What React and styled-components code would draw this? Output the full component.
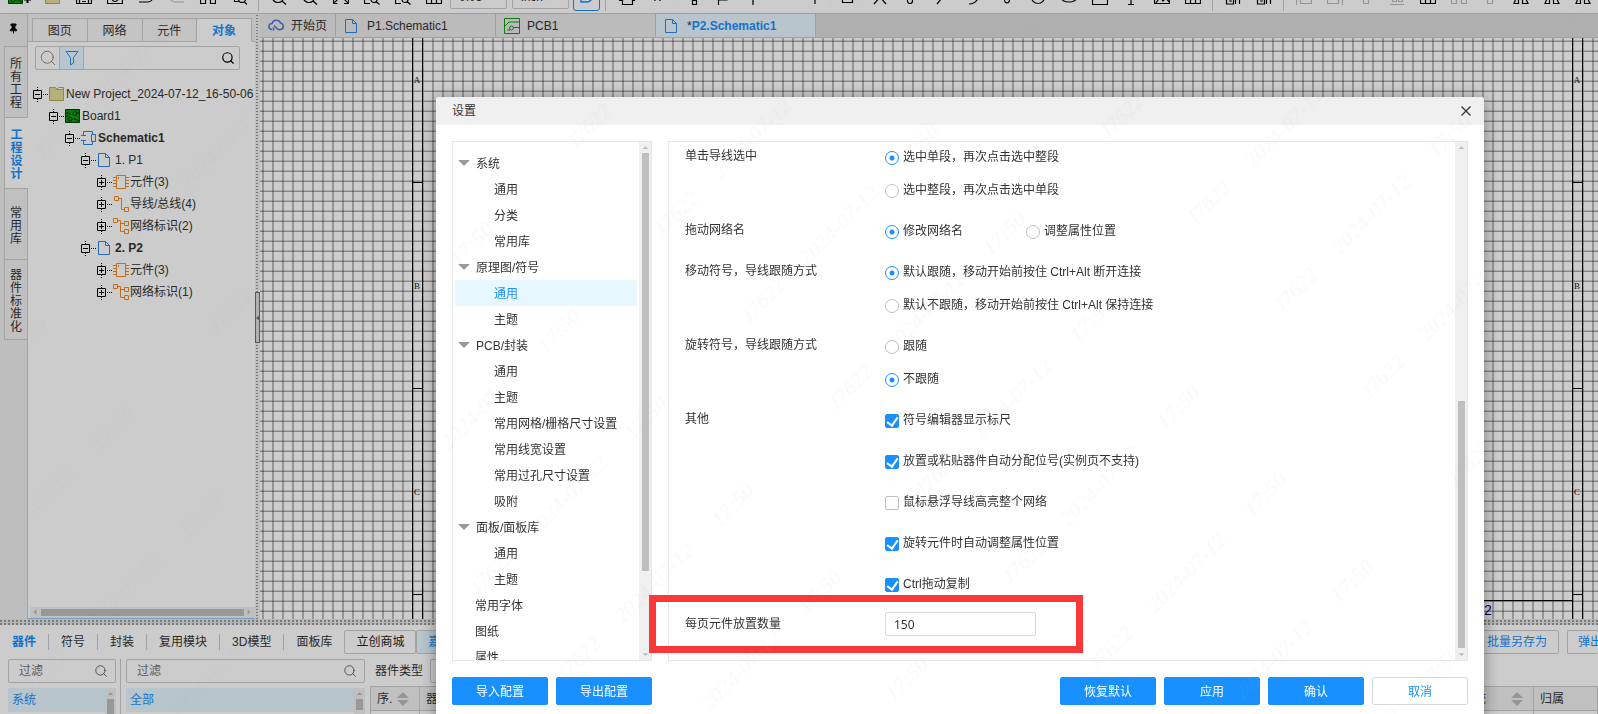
import React from 'react'
import styled, { createGlobalStyle, css } from 'styled-components'
import { Pin, Search } from 'lucide-react'

const GlobalStyle = createGlobalStyle`
  * {
    box-sizing: border-box;
  }

  body {
    margin: 0;
    overflow: hidden;
  }

  body,
  button,
  input,
  select {
    font-family: 'Liberation Sans', 'Noto Sans CJK SC', sans-serif;
    font-size: 12px;
    line-height: 16px;
    color: #333;
  }
`

const Page = styled.div`
  display: grid;
  grid-template-rows: 14px minmax(0, 1fr) 95px;
  height: 100vh;
  overflow: hidden;
  background: #fff;
`

/* top toolbar */

const Toolbar = styled.header`
  display: flex;
  align-items: flex-end;
  overflow: hidden;
  padding-left: 6px;
  border-bottom: 1px solid #c8c8c8;
`

const ToolSlot = styled.button`
  flex: none;
  display: flex;
  align-items: flex-end;
  justify-content: center;
  width: ${props => props.$width || 31}px;
  height: 24px;
  padding: 0 0 8px;
  border: none;
  background: none;
  color: ${props => (props.$muted ? '#bbb' : '#000')};
`

const ToolSpace = styled.span`
  flex: none;
  width: 30px;
`

const ToolDivider = styled.span`
  flex: none;
  width: 1px;
  height: 24px;
  margin: 0 ${props => props.$gap || 4}px 2px;
  background: #c8c8c8;
`

const ToolSelect = styled.select`
  appearance: none;
  flex: none;
  width: 57px;
  height: 24px;
  margin: 0 4px 4px 1px;
  padding: 0 8px;
  border: 1px solid #ccc;
  border-radius: 2px;
  background: #fff;
`

const ToolToggle = styled.button`
  flex: none;
  display: flex;
  align-items: flex-end;
  justify-content: center;
  width: 27px;
  height: 26px;
  margin-bottom: 2px;
  padding: 0 0 7px;
  border: 1px solid #1890ff;
  border-radius: 3px;
  background: #fff;
  color: #1890ff;
`

/* project dock */

const Workspace = styled.div`
  display: grid;
  grid-template-columns: 28px 227px 5px minmax(0, 1fr);
  min-height: 0;
`

const Rail = styled.nav`
  display: flex;
  flex-direction: column;
  padding-left: 4px;
  border-right: 1px solid #ccc;
  background: #eee;
`

const PinButton = styled.button`
  display: flex;
  align-items: center;
  justify-content: center;
  height: 32px;
  padding: 0 4px 4px 0;
  border: none;
  background: none;
  color: #000;
`

const RailTab = styled.button`
  display: flex;
  align-items: center;
  justify-content: center;
  min-height: 71px;
  margin-right: ${props => (props.$active ? -1 : 0)}px;
  padding: 9px 0 5px;
  border: 1px solid #ccc;
  border-width: 1px 0 0 1px;
  background: ${props => (props.$active ? '#fff' : '#f0f0f0')};
  color: ${props => (props.$active ? '#1890ff' : '#333')};
  font-weight: ${props => (props.$active ? 'bold' : 'normal')};
  line-height: 13px;

  &:last-child {
    border-bottom-width: 1px;
  }

  span {
    width: 12px;
    word-break: break-all;
  }
`

const DockPanel = styled.section`
  display: flex;
  flex-direction: column;
  min-width: 0;
  border-bottom: 1px solid #96c0ee;
`

const DockTabs = styled.div`
  display: flex;
  height: 28px;
  padding: 4px 3px 0 4px;
  background: #f2f2f2;
  box-shadow: inset 0 -1px #ccc;
`

const DockTab = styled.button`
  flex: 1;
  padding: 2px 0 0;
  border: 1px solid #ccc;
  border-left-width: ${props => (props.$first ? 1 : 0)}px;
  background: #f5f5f5;

  ${props =>
    props.$active &&
    css`
      border-bottom-color: #fff;
      background: #fff;
      color: #1890ff;
      font-weight: bold;
    `}
`

const SearchRow = styled.form`
  display: flex;
  height: 24px;
  margin: 4px 15px 13px 7px;
  border: 1px solid #ccc;
  border-radius: 2px;
`

const SearchButton = styled.button`
  flex: none;
  display: flex;
  align-items: center;
  justify-content: center;
  width: ${props => (props.$last ? 22 : 24)}px;
  padding: 0;
  border: none;
  border-right: ${props => (props.$last ? 'none' : '1px solid #ccc')};
  background: ${props => (props.$active ? '#e6f7ff' : 'none')};
  color: ${props => (props.$last ? '#000' : '#666')};
`

const PlainInput = styled.input`
  flex: 1;
  min-width: 0;
  padding: 0 10px;
  border: none;
  outline: none;
  background: none;

  &::placeholder {
    color: #757575;
  }
`

const Tree = styled.ul`
  flex: 1;
  margin: 0;
  padding: 0;
  overflow: hidden;
  list-style: none;
`

const TreeItem = styled.li`
  display: flex;
  align-items: center;
  height: 22px;
  padding-left: ${props => 5 + props.$level * 16}px;
  font-weight: ${props => (props.$bold ? 'bold' : 'normal')};
  white-space: nowrap;

  svg {
    flex: none;
  }

  span {
    padding-left: ${props => (props.$page ? 2 : 1)}px;
  }
`

const HScroll = styled.div`
  display: flex;
  align-items: center;
  height: 11px;
  margin-left: 2px;
  background: #f0f0f0;
`

const HThumb = styled.div`
  flex: 1;
  height: 7px;
  background: #bfbfbf;
`

const VSplitter = styled.div`
  position: relative;
  background: radial-gradient(circle, #999 0 1px, transparent 1px) 0 0 / 4px 3px
    repeat-y #f0f0f0;
`

const SplitHandle = styled.button`
  position: absolute;
  top: 278px;
  left: 0;
  display: flex;
  align-items: center;
  width: 5px;
  height: 51px;
  padding: 0;
  border: 1px solid #756b6b;
  background: #ddd;
`

/* editor */

const Editor = styled.main`
  display: flex;
  flex-direction: column;
  min-width: 0;
`

const DocTabs = styled.div`
  flex: none;
  display: flex;
  height: 24px;
  border-bottom: 1px solid #ccc;
  background: #dcdcdc;
`

const DocTab = styled.button`
  display: flex;
  align-items: center;
  gap: 7px;
  width: ${props => (props.$home ? 76 : 160)}px;
  padding: 0 8px;
  border: none;
  border-right: 1px solid #c8c8c8;
  background: ${props => (props.$active ? '#e6f7ff' : '#eaeaea')};
  white-space: nowrap;

  b {
    color: #1890ff;
  }
`

const Sheet = styled.svg`
  flex: 1;
  width: 100%;
  min-height: 0;
  background: #fff;
`

/* library */

const Library = styled.section`
  display: flex;
  flex-direction: column;
  min-width: 0;
  overflow: hidden;
`

const HSplitter = styled.div`
  flex: none;
  height: 6px;
  margin-bottom: 5px;
  background: radial-gradient(circle at 1px 1px, #999 0 1px, transparent 1px) 0
    1px / 4px 3px #e6e6e6;
`

const LibraryBar = styled.div`
  flex: none;
  display: flex;
  align-items: center;
  height: 24px;
`

const LibraryTab = styled.button`
  height: 16px;
  padding: 0 12px;
  border: none;
  border-left: ${props => (props.$active ? 'none' : '1px solid #ccc')};
  background: none;
  color: ${props => (props.$active ? '#1890ff' : '#333')};
  font-weight: ${props => (props.$active ? 'bold' : 'normal')};
`

const BoxButton = styled.button`
  flex: none;
  height: 24px;
  padding: 0 11px;
  border: 1px solid #ccc;
  background: ${props => (props.$active ? '#e6f7ff' : '#fff')};
  color: ${props => (props.$blue ? '#1890ff' : '#222')};
  border-radius: 2px;
`

const BarEnd = styled.div`
  display: flex;
  gap: 8px;
  margin-left: auto;
`

const CutButton = styled(BoxButton)`
  width: 31px;
  padding: 0 0 0 10px;
  border-right: none;
  overflow: hidden;
  text-align: left;
  white-space: nowrap;
`

const LibraryBody = styled.div`
  display: grid;
  grid-template-columns: 113px 245px minmax(0, 1fr);
  flex: 1;
  margin-top: 5px;
  padding-left: 8px;
`

const LibraryColumn = styled.div`
  padding-right: ${props => (props.$divided ? 4 : 1)}px;
  padding-left: ${props => (props.$divided ? 0 : 5)}px;
  border-right: ${props => (props.$divided ? '1px solid #ccc' : 'none')};
`

const FilterBox = styled.label`
  display: flex;
  align-items: center;
  height: 24px;
  margin-bottom: 5px;
  padding-right: 7px;
  border: 1px solid #ccc;
  border-radius: 2px;
  color: #555;
`

const ListRow = styled.div`
  display: flex;
  height: 28px;
`

const ListItem = styled.button`
  flex: 1;
  height: 24px;
  padding: 0 4px;
  border: none;
  background: #e6f7ff;
  color: #1890ff;
  text-align: left;
`

const TypeRow = styled.label`
  display: flex;
  align-items: center;
  gap: 7px;
  height: 24px;
  padding-left: 9px;
`

const TypeInput = styled.input`
  width: 140px;
  height: 24px;
  border: 1px solid #ccc;
  border-radius: 2px;
`

const PartTable = styled.table`
  width: calc(100% - 4px);
  margin: 3px 0 0 4px;
  border-collapse: collapse;
  table-layout: fixed;

  th,
  td {
    height: 24px;
    padding: 0 6px;
    border: 1px solid #ccc;
    font-weight: normal;
    text-align: left;
    white-space: nowrap;
  }

  th {
    background: #f0f0f0;
  }
`

const HeadCell = styled.span`
  display: flex;
  align-items: center;
  justify-content: ${props => (props.$end ? 'flex-end' : 'flex-start')};
  gap: ${props => (props.$end ? 25 : 5)}px;
  padding-right: ${props => (props.$end ? 4 : 0)}px;
`

/* settings dialog */

const Backdrop = styled.div`
  position: fixed;
  inset: 0;
  padding: 97px 114px 0 436px;
  background: rgba(0, 0, 0, 0.2);
`

const Dialog = styled.div`
  position: relative;
  border-radius: 3px;
  background: #fff;
  box-shadow: 0 2px 16px rgba(0, 0, 0, 0.4);
`

const DialogHead = styled.div`
  display: flex;
  align-items: center;
  justify-content: space-between;
  height: 28px;
  padding: 0 12px 0 16px;
  border-radius: 3px 3px 0 0;
  background: #f0f0f0;
`

const CloseButton = styled.button`
  display: flex;
  padding: 0;
  border: none;
  background: none;
`

const DialogBody = styled.div`
  display: grid;
  grid-template-columns: 200px minmax(0, 1fr);
  gap: 16px;
  padding: 16px;
`

const Pane = styled.div`
  display: flex;
  height: 520px;
  border: 1px solid #e6e6e6;
`

const MenuList = styled.ul`
  flex: 1;
  margin: 0;
  padding: 8px 2px 0;
  overflow: hidden;
  list-style: none;
`

const MenuItem = styled.li`
  display: flex;
  align-items: center;
  gap: 6px;
  height: 26px;
  padding-left: ${props => (props.$level ? 39 : props.$leaf ? 20 : 3)}px;
  background: ${props => (props.$active ? '#e6f7ff' : 'none')};
  color: ${props => (props.$active ? '#1890ff' : '#333')};

  span {
    padding-top: 2px;
  }
`

const VScroll = styled.div`
  flex: none;
  display: flex;
  flex-direction: column;
  align-items: center;
  justify-content: space-between;
  width: ${props => props.$width || 12}px;
  background: #f0f0f0;
`

const VTrack = styled.div`
  flex: 1;
  width: 7px;
  padding-top: ${props => props.$from}px;
`

const VThumb = styled.div`
  height: ${props => props.$size}px;
  background: #bfbfbf;
`

const Form = styled.form`
  flex: 1;
  display: flex;
  flex-direction: column;
  gap: 9px;
  overflow: hidden;
`

const Field = styled.fieldset`
  display: grid;
  grid-template-columns: 200px minmax(0, 1fr);
  margin: 0;
  padding: 0 0 0 16px;
  border: none;
`

const FieldName = styled.span`
  padding-top: 6px;
`

const Options = styled.div`
  display: ${props => (props.$inline ? 'flex' : 'grid')};
  row-gap: ${props => (props.$loose ? 9 : 1)}px;
`

const Option = styled.label`
  display: flex;
  align-items: center;
  gap: 4px;
  min-width: 141px;
  height: 32px;

  span {
    padding-bottom: 2px;
  }
`

const Radio = styled.input`
  appearance: none;
  flex: none;
  width: 14px;
  height: 14px;
  margin: 0;
  border: 1px solid #bfbfbf;
  border-radius: 50%;
  background: #fff;

  &:checked {
    border-color: #1890ff;
    background: radial-gradient(circle, #1890ff 2px, #fff 3px);
  }
`

const Checkbox = styled.input`
  appearance: none;
  flex: none;
  display: grid;
  place-items: center;
  width: 14px;
  height: 14px;
  margin: 0;
  border: 1px solid #bfbfbf;
  border-radius: 2px;
  background: #fff;

  &:checked {
    border-color: #1890ff;
    background: #1890ff;
  }

  &:checked::after {
    content: '';
    width: 5px;
    height: 9px;
    border: solid #fff;
    border-width: 0 2px 2px 0;
    transform: translateY(-1px) rotate(35deg);
  }
`

const NumberInput = styled.input`
  width: 151px;
  height: 24px;
  margin-top: 2px;
  padding: 0 8px;
  border: 1px solid #d9d9d9;
  border-radius: 2px;
  outline: none;
  font-family: 'Noto Sans', sans-serif;
`

const Highlight = styled.div`
  position: absolute;
  top: 498px;
  left: 213px;
  width: 434px;
  height: 58px;
  border: 7px solid #fb3838;
  pointer-events: none;
`

const DialogFoot = styled.div`
  display: flex;
  gap: 8px;
  padding: 0 16px 16px;
`

const Button = styled.button`
  width: 96px;
  height: 28px;
  padding: 2px 0 0;
  border: 1px solid ${props => (props.$plain ? '#d9d9d9' : '#1890ff')};
  border-radius: 2px;
  background: ${props => (props.$plain ? '#fff' : '#1890ff')};
  color: ${props => (props.$plain ? '#1890ff' : '#fff')};

  &.push {
    margin-left: auto;
  }
`

const WatermarkLayer = styled.svg`
  position: fixed;
  inset: 0;
  width: 100%;
  height: 100%;
  pointer-events: none;
`

/* drawings */

const Glyph = ({ w = 16, h = 16, color = 'currentColor', children }) => (
  <svg
    width={w}
    height={h}
    viewBox={`0 0 ${w} ${h}`}
    fill="none"
    stroke={color}
    aria-hidden="true"
  >
    {children}
  </svg>
)

const Arrow = ({ dir }) => {
  const points = {
    up: '3,7 6,4 9,7',
    down: '3,4 6,7 9,4',
    left: '7,2 4,5 7,8',
    right: '4,2 7,5 4,8',
  }
  return (
    <svg width="11" height="11" viewBox="0 0 12 11" fill="#bbb">
      <polygon points={points[dir]} />
    </svg>
  )
}

const Caret = () => (
  <svg width="12" height="7" viewBox="0 0 12 7" fill="#999">
    <polygon points="0,0 12,0 6,6" />
  </svg>
)

const SortIcon = () => (
  <svg width="12" height="14" viewBox="0 0 12 14" fill="#bbb">
    <polygon points="0,6 6,0 12,6" />
    <polygon points="0,8 12,8 6,14" />
  </svg>
)

const Toggle = ({ open }) => (
  <Glyph h={22} color="#000">
    <path d="M0.5 7.5h8v8h-8zM2 11.5h5" />
    {!open && <path d="M4.5 9v5" />}
    <path d="M4.5 4v3M4.5 16v3M10 11.5h5" strokeDasharray="1 1" />
  </Glyph>
)

const PageIcon = () => (
  <Glyph color="#2a86e8">
    <path d="M1.5 1.5h7l4 4v9h-11zM8.5 1.5v4h4" />
  </Glyph>
)

const icons = {
  folder: (
    <Glyph color="#b5a85a">
      <path d="M.5 1.5h6l1 2h7v11H.5z" fill="#e6dc9a" />
      <path d="M7.5 3.5l2-2h5v2" />
    </Glyph>
  ),
  board: (
    <Glyph color="#003c00">
      <path d="M.5 1.5h14v13H.5z" fill="#0a9a12" />
      <circle cx="10" cy="5.500" r="2" />
      <circle cx="5" cy="11" r="2" />
      <path d="M1 5h3l2 2M12 5l2-1M7 11h3l4 2M1 9l3-2" />
    </Glyph>
  ),
  schematic: (
    <Glyph color="#2a86e8">
      <path d="M2.5 6V1.500h9V4M2.500 10v4.500h9V12M0 5.500h5M0 10.500h5M10.500 4.500h4v7h-4z" />
    </Glyph>
  ),
  page: <PageIcon />,
  part: (
    <Glyph color="#f08a24">
      <path d="M3.500 1.500h9v13h-9zM0 3.500h3M0 6.500h3M0 9.500h3M0 12.500h3M13 3.500h3M13 6.500h3M13 9.500h3M13 12.500h3M5.500 3v2" />
    </Glyph>
  ),
  wire: (
    <Glyph color="#f08a24">
      <path d="M1.500.5h4v4h-4zM11.500 11.500h4v4h-4zM5.500 2.500h3v11h3" />
    </Glyph>
  ),
  net: (
    <Glyph color="#f08a24">
      <path d="M.5.5h4v4h-4zM11.500 3.500h4v4h-4zM11.500 11.500h4v4h-4zM4.500 2.500h3v11h4M7.500 5.500h4" />
    </Glyph>
  ),
}

const PcbIcon = () => (
  <Glyph color="#0a9a12">
    <path d="M.5.5h15v15H.5zM1 8l4-4h10M3 12h3M10 9.500h5" />
    <circle cx="7.500" cy="10" r="2" />
  </Glyph>
)

const CloudIcon = () => (
  <Glyph color="#4f77e0">
    <path
      d="M4 11.500a3 3 0 1 1 0-6 4.500 4.500 0 0 1 8.500-.5 3.300 3.300 0 0 1 0 6.500h-2.500l-4-4M5.500 9.500v3"
      strokeWidth="1.600"
    />
  </Glyph>
)

const FilterIcon = () => (
  <Glyph color="#1890ff">
    <path d="M2 1.500h12l-4.500 6v5.500l-3 2v-7.500z" />
  </Glyph>
)

const toolPaths = {
  camera: 'M.5 3.500h15v11H.5zM8 6.500a3 3 0 1 1 0 6 3 3 0 0 1 0-6z',
  save: 'M.5.5h15v14H.5zM3.500 14v-4h9v4M6 12.500h4',
  undo: 'M3 1l-3 3 3 3M1 4h9a4 4 0 0 1 0 9H1',
  redo: 'M13 1l3 3-3 3M15 4H6a4 4 0 0 0 0 9h9',
  columns: 'M.5.5h5v14h-5zM10.500.5h5v14h-5z',
  find: 'M0 9.500h4M3.500 7v5.500h4M11 6.500a3.500 3.500 0 1 1 0 7 3.500 3.500 0 0 1 0-7zM13.500 13l2.500 2.500',
  zoom: 'M7 1.500a6 6 0 1 1 0 12 6 6 0 0 1 0-12zM11 12l4 3.500M4 7.500h6',
  expand: 'M5 5L1 1M11 5l4-4M5 10l-4 4M11 10l4 4M.5 10v4.500h4M11 14.500h4.500V10',
  area: 'M6 14.500H.5v-14h14V5M10 7.500a3 3 0 1 1 0 6 3 3 0 0 1 0-6zM12.500 13l3 2.500',
  grid: 'M.5.500h15v14H.5zM.5 9.500h15M5.500 1v13M10.500 1v13',
  chip: 'M3.500 2.500h10v13h-10zM0 11.500h3M14 11.500h3',
  wires: 'M3 1l2 11M8 1l2 11M13 1v10',
  nodes: 'M4.500 1v8h6M10.500 6.500h4v4h-4zM8.500 11.500h4v4h-4z',
  flag: 'M3.500 1v15M4 3h8v8H4',
  sheet: 'M.5 2.500h15v8H.5zM8 11v5',
  stem: 'M8 0v15',
  box: 'M3.500 2.500h10v11h-10z',
  cross: 'M2 15L14 1M2 1l12 14',
  pin: 'M8 9.500a2 2 0 1 1 0 5 2 2 0 0 1 0-5zM8 0v9',
  line: 'M5 15L14 4',
  arc: 'M3 15q10 0 10-13',
  bezier: 'M5 1q-1 13 3 13t3-13',
  circle: 'M8 1.500a6.500 6.500 0 1 1 0 13 6.500 6.500 0 0 1 0-13z',
  ellipse: 'M8 4a7 4 0 1 1 0 9 7 4 0 0 1 0-9z',
  rect: 'M.5 2.500h15v13H.5z',
  text: 'M2 1.500h12M8 2v13M5 15.500h6',
  image: 'M.5 1.500h15v13H.5zM2 14l4-6 3 4 3-3 3 4',
  pair: 'M1.500 1v14h7V9h-4M10.500 1v14M14.500 1v14M4 12h3',
  alignLeft: 'M.5 0v16M4.500 2.500h11v12h-11z',
  alignRight: 'M15.500 0v16M.5 2.500h11v12H.5z',
  centre: 'M5.500 1.500h5v13h-5z',
  bottom: 'M1 15.500h14M3.500 2.500h4v10h-4zM9.500 2.500h4v10h-4z',
  mirror: 'M1 14.500L5.500 3v11.500zM9.500 3v11.500H15z',
}

const Tool = ({ name, muted, width }) => (
  <ToolSlot $muted={muted} $width={width} aria-label={name}>
    <Glyph>
      <path d={toolPaths[name]} strokeWidth="1.200" />
    </Glyph>
  </ToolSlot>
)

const ToolCaret = () => (
  <svg width="5" height="14" viewBox="0 0 5 14" fill="#888">
    <polygon points="0,0 5,0 2,3" />
  </svg>
)

const fileTools = ['save', 'camera', 'undo', 'redo', 'columns', 'find']
const viewTools = ['zoom', 'zoom', 'expand', 'area', 'area', 'grid']
const shapeTools = [
  'bezier',
  'circle',
  'ellipse',
  'rect',
  'text',
  'image',
  'grid',
]
const alignTools = [
  'alignLeft',
  'alignRight',
  'centre',
  'bottom',
  'grid',
  'columns',
  'centre',
  'mirror',
  'mirror',
  'mirror',
]

const treeRows = [
  { level: 0, icon: 'folder', text: 'New Project_2024-07-12_16-50-06', open: true },
  { level: 1, icon: 'board', text: 'Board1', open: true },
  { level: 2, icon: 'schematic', text: 'Schematic1', open: true, bold: true },
  { level: 3, icon: 'page', text: '1. P1', open: true },
  { level: 4, icon: 'part', text: '元件(3)' },
  { level: 4, icon: 'wire', text: '导线/总线(4)' },
  { level: 4, icon: 'net', text: '网络标识(2)' },
  { level: 3, icon: 'page', text: '2. P2', open: true, bold: true },
  { level: 4, icon: 'part', text: '元件(3)' },
  { level: 4, icon: 'net', text: '网络标识(1)' },
]

const menuGroups = [
  { name: '系统', items: ['通用', '分类', '常用库'] },
  { name: '原理图/符号', items: ['通用', '主题'], active: '通用' },
  {
    name: 'PCB/封装',
    items: [
      '通用',
      '主题',
      '常用网格/栅格尺寸设置',
      '常用线宽设置',
      '常用过孔尺寸设置',
      '吸附',
    ],
  },
  { name: '面板/面板库', items: ['通用', '主题'] },
  { name: '常用字体' },
  { name: '图纸' },
  { name: '属性' },
]

const radioFields = [
  {
    name: '单击导线选中',
    options: ['选中单段，再次点击选中整段', '选中整段，再次点击选中单段'],
    value: 0,
  },
  {
    name: '拖动网络名',
    options: ['修改网络名', '调整属性位置'],
    value: 0,
    inline: true,
  },
  {
    name: '移动符号，导线跟随方式',
    options: [
      '默认跟随，移动开始前按住 Ctrl+Alt 断开连接',
      '默认不跟随，移动开始前按住 Ctrl+Alt 保持连接',
    ],
    value: 0,
  },
  { name: '旋转符号，导线跟随方式', options: ['跟随', '不跟随'], value: 1 },
]

const otherOptions = [
  ['符号编辑器显示标尺', true],
  ['放置或粘贴器件自动分配位号(实例页不支持)', true],
  ['鼠标悬浮导线高亮整个网络', false],
  ['旋转元件时自动调整属性位置', true],
  ['Ctrl拖动复制', true],
]

const TopToolbar = () => (
  <Toolbar>
    <ToolSlot aria-label="new">
      {icons.board}
      <Glyph w={7}>
        <path d="M0 10.500h7M3.500 7v7" strokeWidth="2" />
      </Glyph>
      <ToolCaret />
    </ToolSlot>
    <ToolSlot aria-label="open">{icons.folder}</ToolSlot>
    {fileTools.map(name => (
      <Tool key={name} name={name} muted={name === 'redo'} />
    ))}
    <ToolDivider />
    {viewTools.map((name, i) => (
      <Tool key={i} name={name} />
    ))}
    <ToolSelect aria-label="grid size">
      <option>0.05</option>
    </ToolSelect>
    <ToolSelect aria-label="unit">
      <option>inch</option>
    </ToolSelect>
    <ToolToggle aria-label="snap">
      <Glyph w={14} h={12}>
        <path d="M1 1v10h6a5 5 0 0 0 5-5V0M4 8h4" strokeWidth="1.500" />
      </Glyph>
    </ToolToggle>
    <ToolDivider $gap={5} />
    <Tool name="chip" />
    <Tool name="wires" />
    <ToolCaret />
    <Tool name="nodes" width={36} />
    <Tool name="flag" width={26} />
    <Tool name="sheet" width={34} />
    <ToolSpace />
    <Tool name="stem" />
    <ToolCaret />
    <Tool name="box" />
    <ToolCaret />
    <Tool name="cross" width={34} />
    <Tool name="pin" width={26} />
    <Tool name="line" width={34} />
    <Tool name="arc" width={34} />
    {shapeTools.map(name => (
      <Tool key={name} name={name} />
    ))}
    <ToolDivider />
    <Tool name="pair" />
    <Tool name="pair" />
    <ToolDivider />
    {alignTools.map((name, i) => (
      <Tool key={i} name={name} muted={i !== 4 && i < 7} />
    ))}
  </Toolbar>
)

const ProjectDock = () => (
  <>
    <Rail>
      <PinButton aria-label="pin">
        <Pin size={11} fill="#000" />
      </PinButton>
      {['所有工程', '工程设计', '常用库', '器件标准化'].map(name => (
        <RailTab key={name} $active={name === '工程设计'}>
          <span>{name}</span>
        </RailTab>
      ))}
    </Rail>
    <DockPanel>
      <DockTabs>
        {['图页', '网络', '元件', '对象'].map((name, i) => (
          <DockTab key={name} $first={i === 0} $active={name === '对象'}>
            {name}
          </DockTab>
        ))}
      </DockTabs>
      <SearchRow>
        <SearchButton type="button" aria-label="find">
          <Search size={18} strokeWidth={1} />
        </SearchButton>
        <SearchButton type="button" aria-label="filter" $active>
          <FilterIcon />
        </SearchButton>
        <PlainInput aria-label="search objects" />
        <SearchButton type="button" aria-label="search" $last>
          <Search size={14} strokeWidth={2} />
        </SearchButton>
      </SearchRow>
      <Tree>
        {treeRows.map((row, i) => (
          <TreeItem
            key={i}
            $level={row.level}
            $bold={row.bold}
            $page={row.icon === 'page'}
          >
            <Toggle open={row.open} />
            {icons[row.icon]}
            <span>{row.text}</span>
          </TreeItem>
        ))}
      </Tree>
      <HScroll>
        <Arrow dir="left" />
        <HThumb />
        <Arrow dir="right" />
      </HScroll>
    </DockPanel>
    <VSplitter>
      <SplitHandle aria-label="collapse">
        <svg width="4" height="6" viewBox="0 0 4 6" fill="#756b6b">
          <polygon points="0,3 4,0 4,6" />
        </svg>
      </SplitHandle>
    </VSplitter>
  </>
)

const SchematicSheet = () => (
  <Sheet>
    <defs>
      <pattern id="grid" x="2" y="2" width="10" height="10" patternUnits="userSpaceOnUse">
        <rect width="2" height="10" fill="#bbb" />
        <rect width="10" height="1" fill="#000" fillOpacity="0.15" />
        <rect y="1" width="10" height="1" fill="#000" fillOpacity="0.35" />
      </pattern>
    </defs>
    <rect width="100%" height="100%" fill="url(#grid)" />
    <path
      d="M152.500 0v600M162.500 0v600M1312.500 0v600M1322.500 0v600M153 144.500h10M153 350.500h10M153 556.500h10M1313 144.500h10M1313 350.500h10M1313 556.500h10M700 562.500h613"
      stroke="#000"
      shapeRendering="crispEdges"
    />
    <g fill="#111" fontFamily="Liberation Serif" fontSize="9" textAnchor="middle">
      {['A', 'B', 'C'].map((letter, i) => (
        <React.Fragment key={letter}>
          <text x="157" y={45 + i * 206}>
            {letter}
          </text>
          <text x="1317" y={45 + i * 206}>
            {letter}
          </text>
        </React.Fragment>
      ))}
    </g>
    <text x="1224" y="577" fill="#000080" fontFamily="Liberation Sans" fontSize="14">
      2
    </text>
  </Sheet>
)

const EditorArea = () => (
  <Editor>
    <DocTabs>
      <DocTab $home>
        <CloudIcon />
        <span>开始页</span>
      </DocTab>
      <DocTab>
        <PageIcon />
        <span>P1.Schematic1</span>
      </DocTab>
      <DocTab>
        <PcbIcon />
        <span>PCB1</span>
      </DocTab>
      <DocTab $active>
        <PageIcon />
        <span>
          *<b>P2.Schematic1</b>
        </span>
      </DocTab>
    </DocTabs>
    <SchematicSheet />
  </Editor>
)

const FilterColumn = ({ item, divided }) => (
  <LibraryColumn $divided={divided}>
    <FilterBox>
      <PlainInput placeholder="过滤" aria-label={`过滤${item}`} />
      <Search size={14} strokeWidth={1.5} />
    </FilterBox>
    <ListRow>
      <ListItem>{item}</ListItem>
      <VScroll $width={11}>
        <Arrow dir="up" />
        <VTrack $from={0}>
          <VThumb $size={divided ? 17 : 11} />
        </VTrack>
      </VScroll>
    </ListRow>
  </LibraryColumn>
)

const LibraryPanel = () => (
  <Library>
    <HSplitter />
    <LibraryBar>
      {['器件', '符号', '封装', '复用模块', '3D模型', '面板库'].map(name => (
        <LibraryTab key={name} $active={name === '器件'}>
          {name}
        </LibraryTab>
      ))}
      <BoxButton>立创商城</BoxButton>
      <BoxButton $active $blue>
        嘉立创
      </BoxButton>
      <BarEnd>
        <BoxButton $blue>批量另存为</BoxButton>
        <CutButton $blue>弹出</CutButton>
      </BarEnd>
    </LibraryBar>
    <LibraryBody>
      <FilterColumn item="系统" divided />
      <FilterColumn item="全部" />
      <div>
        <TypeRow>
          器件类型
          <TypeInput />
        </TypeRow>
        <PartTable>
          <colgroup>
            <col width="49" />
            <col />
            <col width="100" />
            <col width="64" />
          </colgroup>
          <thead>
            <tr>
              <th>
                <HeadCell>
                  序.
                  <SortIcon />
                </HeadCell>
              </th>
              <th>器件</th>
              <th>
                <HeadCell $end>
                  系统
                  <SortIcon />
                </HeadCell>
              </th>
              <th>归属</th>
            </tr>
          </thead>
          <tbody>
            <tr>
              <td />
              <td />
              <td />
              <td />
            </tr>
          </tbody>
        </PartTable>
      </div>
    </LibraryBody>
  </Library>
)

const SettingsMenu = () => (
  <Pane>
    <MenuList>
      {menuGroups.map(group => (
        <React.Fragment key={group.name}>
          <MenuItem $leaf={!group.items}>
            {group.items && <Caret />}
            <span>{group.name}</span>
          </MenuItem>
          {(group.items || []).map(item => (
            <MenuItem key={item} $level={1} $active={group.active === item}>
              <span>{item}</span>
            </MenuItem>
          ))}
        </React.Fragment>
      ))}
    </MenuList>
    <VScroll>
      <Arrow dir="up" />
      <VTrack $from={0}>
        <VThumb $size={418} />
      </VTrack>
      <Arrow dir="down" />
    </VScroll>
  </Pane>
)

const SettingsForm = () => (
  <Pane>
    <Form>
      {radioFields.map(field => (
        <Field key={field.name} aria-label={field.name}>
          <FieldName>{field.name}</FieldName>
          <Options $inline={field.inline}>
            {field.options.map((text, i) => (
              <Option key={text}>
                <Radio
                  type="radio"
                  name={field.name}
                  defaultChecked={field.value === i}
                />
                <span>{text}</span>
              </Option>
            ))}
          </Options>
        </Field>
      ))}
      <Field aria-label="其他">
        <FieldName>其他</FieldName>
        <Options $loose>
          {otherOptions.map(([text, checked]) => (
            <Option key={text}>
              <Checkbox type="checkbox" defaultChecked={checked} />
              <span>{text}</span>
            </Option>
          ))}
        </Options>
      </Field>
      <Field>
        <FieldName as="label" htmlFor="perPage">
          每页元件放置数量
        </FieldName>
        <NumberInput id="perPage" defaultValue="150" />
      </Field>
    </Form>
    <VScroll>
      <Arrow dir="up" />
      <VTrack $from={248}>
        <VThumb $size={247} />
      </VTrack>
      <Arrow dir="down" />
    </VScroll>
  </Pane>
)

const SettingsDialog = () => (
  <Backdrop>
    <Dialog role="dialog" aria-label="设置">
      <DialogHead>
        设置
        <CloseButton aria-label="close">
          <Glyph w={12} h={12}>
            <path d="M1.500 1.500l9 9M10.500 1.500l-9 9" strokeWidth="1.300" />
          </Glyph>
        </CloseButton>
      </DialogHead>
      <DialogBody>
        <SettingsMenu />
        <SettingsForm />
      </DialogBody>
      <DialogFoot>
        <Button>导入配置</Button>
        <Button>导出配置</Button>
        <Button className="push">恢复默认</Button>
        <Button>应用</Button>
        <Button>确认</Button>
        <Button $plain>取消</Button>
      </DialogFoot>
      <Highlight />
    </Dialog>
  </Backdrop>
)

const Watermark = () => (
  <WatermarkLayer aria-hidden="true">
    <defs>
      <pattern
        id="watermark"
        x="-20"
        width="384"
        height="123"
        patternUnits="userSpaceOnUse"
        patternTransform="rotate(-45)"
      >
        <g
          fill="#aaa"
          fillOpacity="0.08"
          fontFamily="Liberation Serif"
          fontStyle="italic"
          fontSize="22"
          textAnchor="middle"
        >
          <text x="70" y="21">
            2024-07-12
          </text>
          <text x="181" y="21">
            17:50
          </text>
          <text x="347" y="21">
            J7622
          </text>
        </g>
      </pattern>
    </defs>
    <rect width="100%" height="100%" fill="url(#watermark)" />
  </WatermarkLayer>
)

export default function App() {
  return (
    <Page>
      <GlobalStyle />
      <TopToolbar />
      <Workspace>
        <ProjectDock />
        <EditorArea />
      </Workspace>
      <LibraryPanel />
      <SettingsDialog />
      <Watermark />
    </Page>
  )
}
